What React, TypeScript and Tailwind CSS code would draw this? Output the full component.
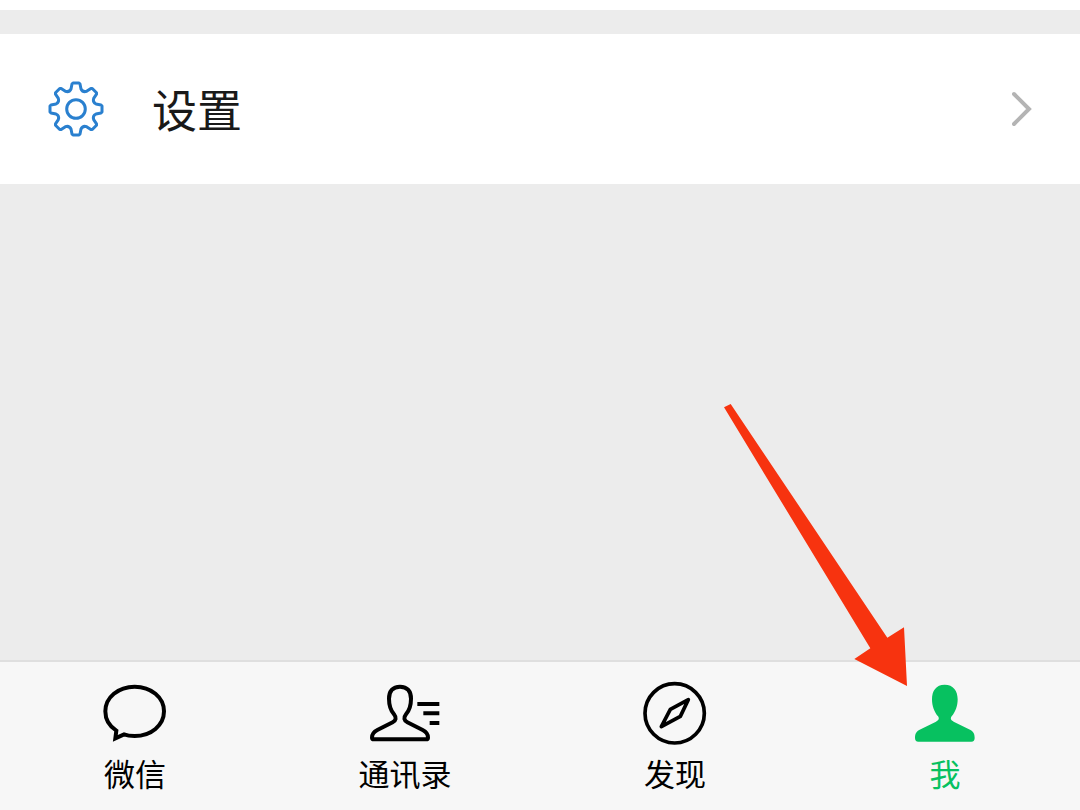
import React, { useState } from 'react';

// outline of an 8-tooth cog centred on 0,0: tooth left, tip, right, then the valley
const tooth = [[-5, -20], [-4, -25], [-3, -26], [3, -26], [4, -25], [5, -20], [6.8, -16.4]];
const gearPath = Array.from({ length: 8 }, (_, i) => {
  const a = (i * Math.PI) / 4;
  const p = tooth.map(([x, y]) => `${(x * Math.cos(a) - y * Math.sin(a)).toFixed(2)} ${(x * Math.sin(a) + y * Math.cos(a)).toFixed(2)}`);
  return `${i === 0 ? 'M' : ''}${p[0]}L${p[1]}L${p[2]}L${p[3]}L${p[4]}L${p[5]}Q${p[6]} `;
}).join('') + '-5 -20Z';

const GearIcon = () => (
  <svg className="w-14 h-14 flex-shrink-0" viewBox="-28 -28 56 56" fill="none" stroke="#2a80cf" strokeWidth="3" strokeLinejoin="round" aria-hidden="true">
    <path d={gearPath} />
    <circle r="9.3" />
  </svg>
);

const ChevronIcon = () => (
  <svg className="w-5 h-9 flex-shrink-0" viewBox="0 0 20 36" fill="none" stroke="#b4b4b4" strokeWidth="4" strokeLinecap="round" aria-hidden="true">
    <path d="M2 3l15 15L2 33" />
  </svg>
);

const ChatIcon = () => (
  <svg className="w-20 h-[66px]" viewBox="15 30 240 198" fill="none" stroke="currentColor" strokeWidth="12" strokeLinejoin="miter" aria-hidden="true">
    <path d="M79 182C57 168 46 147 46 124C46 82 85 50 134 50S222 82 222 124S183 198 134 198C123 198 112 197 102 193L76 205Z" />
  </svg>
);

const ContactsIcon = () => (
  <svg className="w-20 h-[66px]" viewBox="45 30 240 198" fill="none" stroke="currentColor" strokeWidth="12" strokeLinejoin="round" aria-hidden="true">
    <path d="M150 50C128 50 117 64 117 86C117 107 122 121 132 133C140 143 138 152 128 157L82 180C70 186 66 193 66 203Q66 208 72 208H228Q234 208 234 203C234 193 230 186 218 180L172 157C162 152 160 143 168 133C178 121 183 107 183 86C183 64 172 50 150 50Z" />
    <path d="M202 102H268M220 130H268M239 159H268" />
  </svg>
);

const DiscoverIcon = () => (
  <svg className="w-20 h-[66px]" viewBox="15 30 240 198" fill="none" stroke="currentColor" strokeWidth="11" strokeLinejoin="round" aria-hidden="true">
    <circle cx="134" cy="130" r="89" />
    <path d="M175 89L151 139L94 170L121 118Z" />
  </svg>
);

const MeIcon = () => (
  <svg className="w-20 h-[66px]" viewBox="195 210 240 198" fill="currentColor" aria-hidden="true">
    <path d="M314 224C288 224 276 243 276 268C276 288 283 307 294 319C299 326 296 331 288 335L242 358C229 364 225 371 225 384Q225 395 235 395H394Q404 395 404 384C404 371 400 364 387 358L341 335C333 331 330 326 335 319C346 307 353 288 353 268C353 243 340 224 314 224Z" />
  </svg>
);

const tabs = [
  { id: 'chats', label: '微信', icon: ChatIcon },
  { id: 'contacts', label: '通讯录', icon: ContactsIcon },
  { id: 'discover', label: '发现', icon: DiscoverIcon },
  { id: 'me', label: '我', icon: MeIcon },
];

export default function App() {
  const [active, setActive] = useState('me');

  return (
    <div className="relative min-h-screen flex flex-col bg-[#ececec] text-[#191919] font-['Noto_Sans_CJK_SC',sans-serif]">
      <div className="h-2.5 bg-white" />
      <main className="flex-1 pt-6">
        <button className="w-full h-[150px] flex items-center px-12 bg-white text-left">
          <GearIcon />
          <span className="flex-1 pl-12 text-[45px] leading-[60px]">设置</span>
          <ChevronIcon />
        </button>
      </main>
      <nav className="grid grid-cols-4 border-t-2 border-[#dfdfdf] bg-[#f7f7f7]">
        {tabs.map(({ id, label, icon: Icon }) => (
          <button
            key={id}
            onClick={() => setActive(id)}
            aria-current={active === id ? 'page' : undefined}
            className={`h-[148px] flex flex-col items-center pt-[18px] ${active === id ? 'text-[#07c160]' : 'text-black'}`}
          >
            <Icon />
            <span className="pt-2 text-[31px] leading-[38px]">{label}</span>
          </button>
        ))}
      </nav>

      {/* pointer to the active tab */}
      <svg className="absolute right-[173px] bottom-[124px] w-[183px] h-[282px] pointer-events-none" viewBox="72 42 549 846" fill="#f7330f" aria-hidden="true">
        <path d="M72 52L92 42L562 743L612 712L621 888L463 807L511 775Z" />
      </svg>
    </div>
  );
}
